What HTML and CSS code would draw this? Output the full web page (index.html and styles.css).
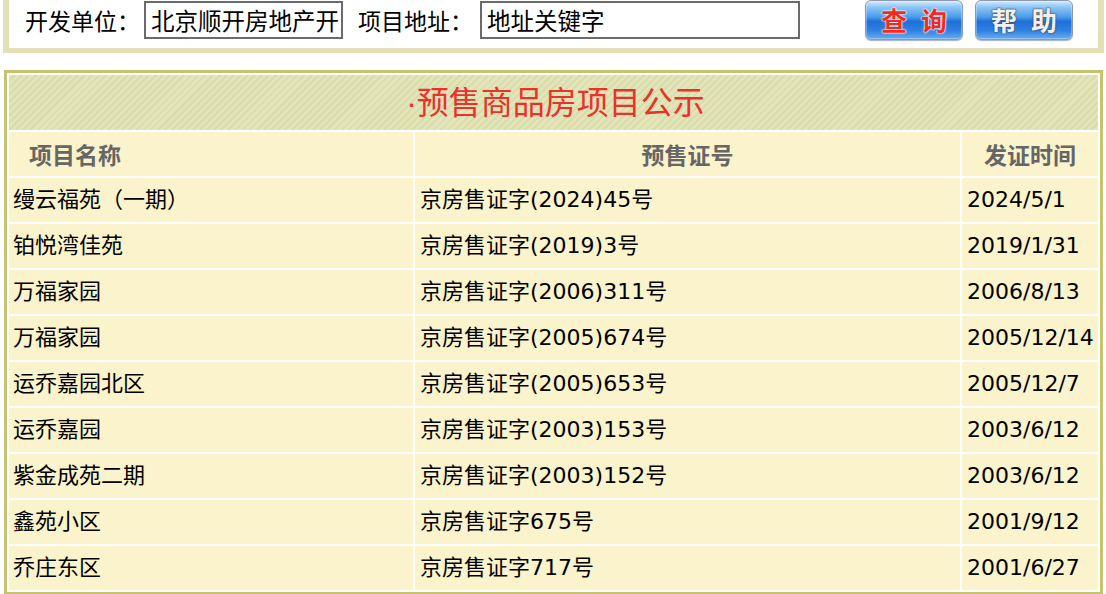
FILE: index.html
```html
<!DOCTYPE html>
<html lang="zh-CN">
<head>
<meta charset="utf-8">
<title>预售商品房项目公示</title>
<link rel="stylesheet" href="styles.css">
</head>
<body>
<form class="search-panel">
  <label class="field-label">开发单位：</label>
  <input class="field-input field-dev" type="text" value="北京顺开房地产开发有限公司">
  <label class="field-label field-label-2">项目地址：</label>
  <input class="field-input field-addr" type="text" value="地址关键字">
  <div class="buttons">
    <button type="button" class="img-btn btn-query">查询</button>
    <button type="button" class="img-btn btn-help">帮助</button>
  </div>
</form>

<table class="presale">
  <colgroup>
    <col class="c-name">
    <col class="c-cert">
    <col class="c-date">
  </colgroup>
  <tr>
    <td class="title" colspan="3">·预售商品房项目公示</td>
  </tr>
  <tr class="head">
    <th class="col-name">项目名称</th>
    <th class="col-cert">预售证号</th>
    <th class="col-date">发证时间</th>
  </tr>
  <tr><td>缦云福苑（一期）</td><td>京房售证字(2024)45号</td><td>2024/5/1</td></tr>
  <tr><td>铂悦湾佳苑</td><td>京房售证字(2019)3号</td><td>2019/1/31</td></tr>
  <tr><td>万福家园</td><td>京房售证字(2006)311号</td><td>2006/8/13</td></tr>
  <tr><td>万福家园</td><td>京房售证字(2005)674号</td><td>2005/12/14</td></tr>
  <tr><td>运乔嘉园北区</td><td>京房售证字(2005)653号</td><td>2005/12/7</td></tr>
  <tr><td>运乔嘉园</td><td>京房售证字(2003)153号</td><td>2003/6/12</td></tr>
  <tr><td>紫金成苑二期</td><td>京房售证字(2003)152号</td><td>2003/6/12</td></tr>
  <tr><td>鑫苑小区</td><td>京房售证字675号</td><td>2001/9/12</td></tr>
  <tr><td>乔庄东区</td><td>京房售证字717号</td><td>2001/6/27</td></tr>
</table>
</body>
</html>
```

FILE: styles.css
```css
html, body {
  margin: 0;
  padding: 0;
  background: #ffffff;
}

body {
  width: 1106px;
  height: 594px;
  overflow: hidden;
  font-family: "DejaVu Sans", "Noto Sans CJK SC", sans-serif;
  font-size: 22px;
  color: #000;
}

/* ---------- search panel ---------- */
.search-panel {
  margin: 0 0 0 3px;
  width: 1101px;
  box-sizing: border-box;
  height: 53px;
  border-left: 6px solid #e2e0b4;
  border-right: 6px solid #e2e0b4;
  border-bottom: 5px solid #e2e0b4;
  background: #fff;
  display: flex;
  align-items: flex-start;
  padding: 1px 0 0 16px;
}

.field-label {
  font-family: "Noto Sans CJK SC", sans-serif;
  font-size: 23px;
  line-height: 38px;
  width: 112px;
  margin-right: 7px;
  white-space: nowrap;
}

.field-label-2 {
  margin-left: 15px;
  margin-right: 7px;
  width: 115px;
}

.field-input {
  box-sizing: border-box;
  height: 38px;
  border: 2px solid #6b6b6b;
  padding: 0 1px 0 5px;
  font-family: "Noto Sans CJK SC", sans-serif;
  font-size: 23.5px;
  color: #000;
  background: #fff;
  outline: none;
}

.field-dev { width: 199px; }
.field-addr { width: 320px; }

.buttons {
  display: flex;
  gap: 12px;
  margin-left: 65px;
  margin-top: -1px;
}

.img-btn {
  box-sizing: border-box;
  width: 98px;
  height: 40px;
  border: 1px solid #8c9aab;
  border-radius: 6px;
  padding: 0 0 0 14px;
  background: linear-gradient(to bottom, #d5ebfc 0%, #8cc6f5 16%, #4a9cea 42%, #1f6fd8 54%, #2f82e4 78%, #66adf0 100%);
  box-shadow: inset 0 0 0 1px rgba(255,255,255,0.3), 0 1px 1px #a8b0b8;
  font-family: "Noto Sans CJK SC", sans-serif;
  font-weight: 700;
  font-size: 26px;
  letter-spacing: 14px;
  line-height: 36px;
  white-space: nowrap;
  overflow: hidden;
  cursor: pointer;
}

.btn-query {
  color: #ef2a1f;
  text-shadow: 0 0 2px #fff, 0 0 2px #fff, 0 0 1px #fff;
}

.btn-help {
  color: #eef0f4;
  text-shadow: 0 0 2px #4a4a4a, 0 0 1px #4a4a4a, 0 0 1px #4a4a4a;
}

/* ---------- table ---------- */
.presale {
  margin: 17px 0 0 4px;
  width: 1099px;
  border: 3px solid #c6c46a;
  border-spacing: 2px;
  background: #fff;
  font-family: "DejaVu Sans", "Noto Sans CJK SC", sans-serif;
  font-size: 22px;
  line-height: 24px;
  table-layout: fixed;
}

.c-name { width: 404px; }
.c-cert { width: 545px; }
.c-date { width: 136px; }

.presale td,
.presale th {
  background: #faf3cb;
  height: 44px;
  padding: 0 0 0 5px;
  text-align: left;
  vertical-align: middle;
  white-space: nowrap;
  overflow: hidden;
}

.presale td:first-child { padding-left: 4px; }

.presale .title {
  height: 55px;
  padding: 0;
  text-align: center;
  color: #e8322a;
  font-family: "Liberation Sans", "Noto Sans CJK SC", sans-serif;
  font-size: 32px;
  line-height: 40px;
  background: repeating-linear-gradient(135deg, #e2e4b9 0px, #e2e4b9 3px, #dadcac 3px, #dadcac 5px);
}

.presale th {
  color: #666;
  font-family: "Noto Sans CJK SC", sans-serif;
  font-weight: 700;
  font-size: 23px;
}

.presale .col-name { padding-left: 20px; }
.presale .col-cert { text-align: center; padding-left: 0; }
.presale .col-date { text-align: center; padding-left: 0; }
```
